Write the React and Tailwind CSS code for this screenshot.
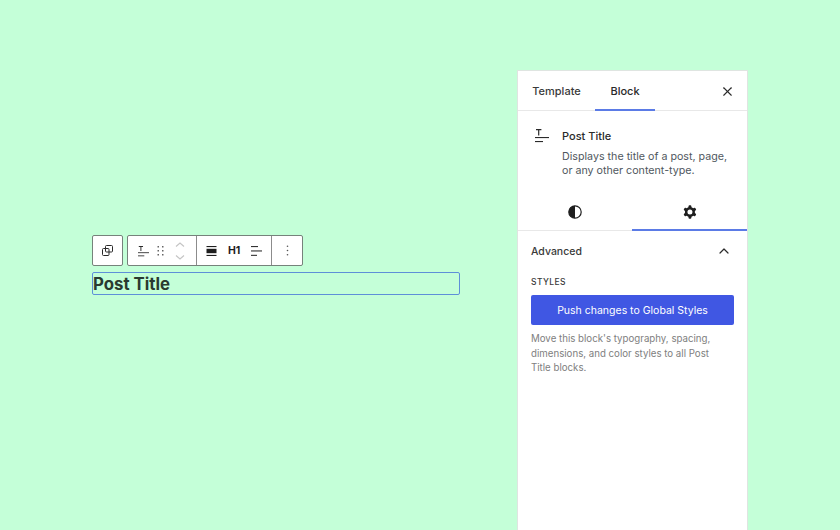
import { X, ChevronUp } from "lucide-react";

function TitleIcon({ className = "" }) {
  return (
    <svg viewBox="0 0 14 14" className={className} fill="currentColor">
      <path d="M1 0h5.4v1.2H4.3v5.3H3.1V1.2H1z" />
      <rect x="0" y="8" width="14" height="1.1" />
      <rect x="0" y="12" width="8" height="1.1" />
    </svg>
  );
}

function DragIcon() {
  return (
    <svg width="8" height="10" viewBox="0 0 8 10" fill="#666">
      <rect x="0.5" y="0" width="1.5" height="1.5" />
      <rect x="5" y="0" width="1.5" height="1.5" />
      <rect x="0.5" y="4" width="1.5" height="1.5" />
      <rect x="5" y="4" width="1.5" height="1.5" />
      <rect x="0.5" y="8" width="1.5" height="1.5" />
      <rect x="5" y="8" width="1.5" height="1.5" />
    </svg>
  );
}

function MoverIcon() {
  return (
    <svg width="10" height="18" viewBox="0 0 10 18" fill="none" stroke="#c4c4c4" strokeWidth="1.1">
      <path d="M1 4.5 5 1l4 3.5" />
      <path d="M1 13.5 5 17l4-3.5" />
    </svg>
  );
}

function DuplicateIcon() {
  return (
    <svg width="11" height="11" viewBox="0 0 11 11" fill="none" stroke="#2a2a2a" strokeWidth="1">
      <rect x="0.5" y="3.5" width="6.5" height="7" rx="1" />
      <rect x="3.5" y="0.5" width="7" height="6.5" rx="1" />
    </svg>
  );
}

function AlignWideIcon() {
  return (
    <svg width="11" height="10" viewBox="0 0 11 10" fill="#1e1e1e">
      <rect x="0.5" y="0" width="10" height="1.1" />
      <rect x="0.5" y="2.8" width="10" height="4.4" />
      <rect x="0.5" y="8.9" width="10" height="1.1" />
    </svg>
  );
}

function TextAlignIcon() {
  return (
    <svg width="11" height="10" viewBox="0 0 11 10" fill="#333">
      <rect x="0" y="0" width="7" height="1.1" />
      <rect x="0" y="4.4" width="11" height="1.1" />
      <rect x="0" y="8.8" width="6" height="1.1" />
    </svg>
  );
}

function DotsIcon() {
  return (
    <svg width="3" height="11" viewBox="0 0 3 11" fill="#555">
      <circle cx="1.5" cy="1.2" r="0.8" />
      <circle cx="1.5" cy="5.5" r="0.8" />
      <circle cx="1.5" cy="9.8" r="0.8" />
    </svg>
  );
}

function ContrastIcon() {
  return (
    <svg width="14" height="14" viewBox="0 0 14 14">
      <circle cx="7" cy="7" r="6.2" fill="none" stroke="#1e1e1e" strokeWidth="1.2" />
      <path d="M7 .8a6.2 6.2 0 0 0 0 12.4z" fill="#1e1e1e" />
    </svg>
  );
}

function CogIcon() {
  return (
    <svg width="20" height="20" viewBox="0 0 24 24" fill="#1e1e1e">
      <path
        fillRule="evenodd"
        clipRule="evenodd"
        d="M10.289 4.836A1 1 0 0111.275 4h1.306a1 1 0 01.987.836l.244 1.466c.787.26 1.503.679 2.108 1.218l1.393-.522a1 1 0 011.216.437l.653 1.13a1 1 0 01-.23 1.273l-1.148.944a6.025 6.025 0 010 2.435l1.149.946a1 1 0 01.23 1.272l-.653 1.13a1 1 0 01-1.216.437l-1.394-.522c-.605.54-1.32.958-2.108 1.218l-.244 1.466a1 1 0 01-.987.836h-1.306a1 1 0 01-.986-.836l-.244-1.466a5.995 5.995 0 01-2.108-1.218l-1.394.522a1 1 0 01-1.217-.436l-.653-1.131a1 1 0 01.23-1.272l1.149-.946a6.026 6.026 0 010-2.435l-1.148-.944a1 1 0 01-.23-1.272l.653-1.131a1 1 0 011.217-.437l1.393.522a5.994 5.994 0 012.108-1.218l.244-1.466zM14.929 12a3 3 0 11-6 0 3 3 0 016 0z"
      />
    </svg>
  );
}

export default function App() {
  return (
    <div className="flex h-[530px] w-[840px] overflow-hidden bg-[#c4ffd8] font-['Inter',sans-serif]">
      {/* canvas side */}
      <div className="w-[517px] shrink-0 pl-[92px] pt-[235px]">
        <div className="flex h-[31px] gap-[4px]">
          <div className="flex w-[31px] items-center justify-center rounded-[2px] border border-[#76827b] bg-white">
            <DuplicateIcon />
          </div>
          <div className="flex rounded-[2px] border border-[#76827b] bg-white">
            <div className="flex w-[68px] items-center pl-[10px] text-[#2a2a2a]">
              <TitleIcon className="mt-[2px] h-[11px] w-[11px] shrink-0" />
              <span className="ml-[8px] flex"><DragIcon /></span>
              <span className="ml-[10px] flex"><MoverIcon /></span>
            </div>
            <div className="flex w-[75px] items-center border-l border-[#8c8c8c] pl-[9px]">
              <AlignWideIcon />
              <span className="ml-[11px] pt-[1px] text-[10.5px] leading-none font-bold text-[#1e1e1e]">H1</span>
              <span className="ml-[11px] flex"><TextAlignIcon /></span>
            </div>
            <div className="flex w-[31px] items-center justify-center border-l border-[#8c8c8c]">
              <DotsIcon />
            </div>
          </div>
        </div>
        <div className="mt-[6px] h-[23px] w-[368px] rounded-[2px] border-[1.5px] border-[#5e8fd8]">
          <h1 className="text-[16.8px] leading-[22px] font-bold text-[#2a3a30]">Post Title</h1>
        </div>
      </div>

      {/* settings panel */}
      <aside className="mt-[70px] h-[460px] w-[231px] shrink-0 border border-b-0 border-[#dfe5e1] bg-white text-[#2a2a2a]">
        <div className="flex h-[40px] items-stretch border-b border-[#e8e8e8]">
          <div className="flex w-[77px] items-center justify-center pt-[2px] text-[11px] font-medium text-[#3a3a3a]">Template</div>
          <div className="-mb-px flex w-[60px] items-center justify-center border-b-2 border-[#5b7be6] pt-[2px] text-[11px] font-medium">Block</div>
          <div className="ml-auto flex items-center pt-[1px] pr-[12px]">
            <X size={15} strokeWidth={1.8} />
          </div>
        </div>
        <div className="flex px-[17px] pt-[18px]">
          <TitleIcon className="h-[14px] w-[14px] shrink-0" />
          <div className="-mt-[3px] ml-[13px]">
            <p className="text-[11px] leading-[20px] font-medium">Post Title</p>
            <p className="mt-[4px] text-[10.7px] leading-[13.5px] text-[#50575e]">
              Displays the title of a post, page, or any other content-type.
            </p>
          </div>
        </div>
        <div className="mt-[14px] flex h-[40px] border-b border-[#e8e8e8]">
          <div className="flex w-[114px] items-center justify-center pt-[3px]"><ContrastIcon /></div>
          <div className="-mb-px flex flex-1 items-center justify-center border-b-2 border-[#5b7be6] pt-[3px]"><CogIcon /></div>
        </div>
        <div className="flex items-center justify-between pl-[13px] pr-[15px] pt-[13px]">
          <span className="text-[10.5px] leading-[16px] font-medium text-[#3a3a3a]">Advanced</span>
          <ChevronUp size={16} strokeWidth={1.8} className="-mt-[2px]" />
        </div>
        <div className="px-[13px] pt-[16px]">
          <p className="text-[8.5px] leading-[13px] font-medium tracking-[0.4px] text-[#3a3a3a]">STYLES</p>
          <button className="mt-[6px] flex h-[30px] w-full items-center justify-center rounded-[2px] bg-[#4057e3] pt-[1px] text-[10.5px] text-white">
            Push changes to Global Styles
          </button>
          <p className="mt-[7px] w-[185px] text-[9.7px] leading-[14.5px] text-[#808080]">
            Move this block's typography, spacing, dimensions, and color styles to all Post Title blocks.
          </p>
        </div>
      </aside>
    </div>
  );
}
